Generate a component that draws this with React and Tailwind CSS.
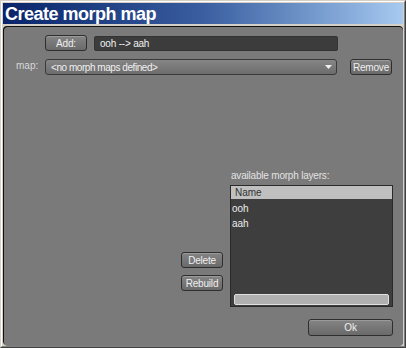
const ui = { fontFamily: '"Liberation Sans", Arial, sans-serif' }

function Btn({ children, className = '' }) {
  return (
    <div
      className={`flex items-center justify-center rounded-[3px] border border-[#2e2e2e] bg-gradient-to-b from-[#848484] to-[#6a6a6a] text-[10px] tracking-[-0.2px] text-[#f0f0f0] shadow-[inset_0_1px_0_#9a9a9a] ${className}`}
    >
      {children}
    </div>
  )
}

export default function App() {
  return (
    <div
      className="w-[406px] h-[348px] bg-[#d4d0c8] border-t border-l border-[#d4d0c8] border-r border-b border-r-[#404040] border-b-[#404040]"
      style={ui}
    >
      <div className="w-full h-full flex flex-col border-t border-l border-white border-r border-b border-r-[#808080] border-b-[#808080] p-px">
        <div className="h-[21px] flex items-center pl-[2px] bg-gradient-to-r from-[#0a246a] via-[#3a5ea0] to-[#a6caf0]">
          <span className="text-white font-bold text-[18px] tracking-[-0.5px] leading-none">Create morph map</span>
        </div>
        <div className="flex-1 mt-[2px] bg-[#111] rounded-[4px]">
          <div className="h-full ml-px mt-px bg-[#7a7a7a] rounded-[4px] flex flex-col">
            <div className="flex items-center mt-[8px] ml-[41px] gap-[7px]">
              <Btn className="w-[42px] h-[16px]">Add:</Btn>
              <div className="w-[244px] h-[15px] rounded-[2px] bg-[#3c3c3c] border border-[#333] flex items-center pl-[5px] text-[10px] tracking-[-0.2px] text-[#f2f2f2]">
                ooh --&gt; aah
              </div>
            </div>
            <div className="flex items-center mt-[8px]">
              <div className="w-[41px] pl-[12px] self-start pt-[2px] leading-none text-[10px] text-[#d8d8d8]">map:</div>
              <div className="w-[292px] h-[16px] rounded-[3px] border border-[#3a3a3a] bg-gradient-to-b from-[#868686] to-[#6c6c6c] flex items-center pl-[5px] pr-[4px] text-[10px] tracking-[-0.45px] text-[#f0f0f0]">
                <span className="flex-1">&lt;no morph maps defined&gt;</span>
                <svg width="7" height="4" viewBox="0 0 7 4">
                  <path d="M0 0h7L3.5 4z" fill="#f0f0f0" />
                </svg>
              </div>
              <Btn className="w-[42px] h-[16px] ml-[13px]">Remove</Btn>
            </div>
            <div className="flex mt-[93px]">
              <div className="ml-[177px] w-[42px] flex flex-col pt-[84px] gap-[7px]">
                <Btn className="h-[16px]">Delete</Btn>
                <Btn className="h-[16px]">Rebuild</Btn>
              </div>
              <div className="ml-[7px] flex flex-col">
                <div className="h-[17px] pl-[1px] text-[10px] tracking-[-0.2px] text-[#e2e2e2]">available morph layers:</div>
                <div className="w-[163px] h-[122px] bg-[#3e3e3e] border border-[#2a2a2a] flex flex-col">
                  <div className="h-[13px] bg-[#c0c0c0] flex items-center pl-[4px] text-[10px] text-[#333]">Name</div>
                  <div className="h-[15px] mt-[2px] flex items-center pl-[1px] text-[10px] text-[#ececec]">ooh</div>
                  <div className="h-[15px] flex items-center pl-[1px] text-[10px] text-[#ececec]">aah</div>
                  <div className="flex-1" />
                  <div className="mx-[3px] mb-[1px] h-[11px] rounded-[2px] border border-[#e0e0e0] bg-[#b0b0b0]" />
                </div>
              </div>
            </div>
            <div className="flex mt-[12px] ml-[304px]">
              <Btn className="w-[85px] h-[17px]">Ok</Btn>
            </div>
          </div>
        </div>
      </div>
    </div>
  )
}
